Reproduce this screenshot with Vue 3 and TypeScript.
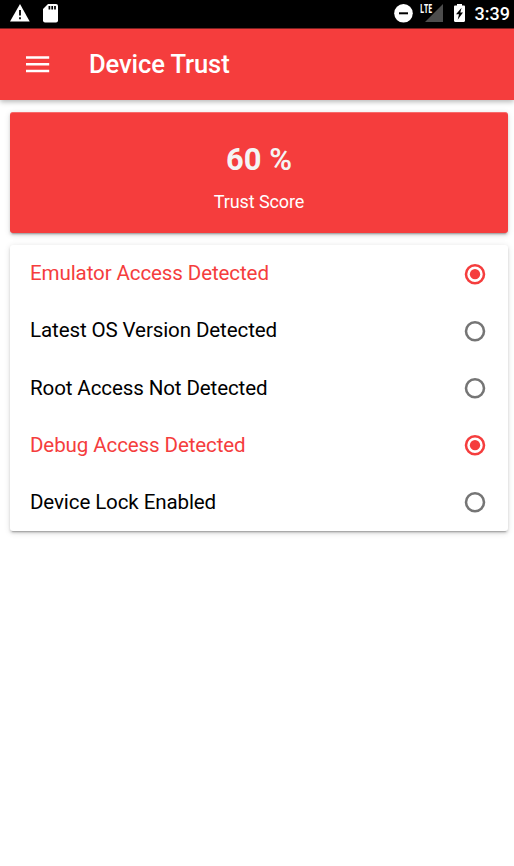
<script setup lang="ts">
interface Check {
  label: string
  alert: boolean
}

const score: number = 60
const checks: Check[] = [
  { label: 'Emulator Access Detected', alert: true },
  { label: 'Latest OS Version Detected', alert: false },
  { label: 'Root Access Not Detected', alert: false },
  { label: 'Debug Access Detected', alert: true },
  { label: 'Device Lock Enabled', alert: false },
]
</script>

<template>
  <div class="screen">
    <div class="status">
      <svg class="warning" width="20" height="18" viewBox="0 0 20 18">
        <path d="M10 0 19.700 17.500H0Z" fill="#fff" />
        <path d="M10 6v5.600M10 13.200v2" stroke="#000" stroke-width="1.800" />
      </svg>
      <svg class="sd" width="15" height="19" viewBox="0 0 15 19">
        <path d="M5 0h8a2 2 0 0 1 2 2v14.500a2 2 0 0 1-2 2H2a2 2 0 0 1-2-2V5Z" fill="#fff" />
        <path d="M6.400 2v3.500M9.200 2v3.500M12 2v3.500" stroke="#000" stroke-width="1.700" />
      </svg>
      <div class="spacer"></div>
      <svg class="dnd" width="19" height="19" viewBox="0 0 19 19">
        <circle cx="9.500" cy="9.300" r="9.300" fill="#fff" />
        <path d="M5 9.300h9" stroke="#000" stroke-width="2" />
      </svg>
      <div class="network">
        <svg width="18" height="18" viewBox="0 0 18 18"><path d="M18 0v18H0Z" fill="#4d4d4d" /></svg>
        <span class="lte">LTE</span>
      </div>
      <svg class="battery" width="11" height="18" viewBox="0 0 11 18">
        <path d="M3 0h5v1.500h1.800c.7 0 1.200.5 1.200 1.200v14.100c0 .7-.5 1.200-1.200 1.200H1.200C.5 18 0 17.500 0 16.800V2.700c0-.7.5-1.200 1.200-1.200H3Z" fill="#fff" />
        <path d="M7.600 3.800 2 10.300h3L3.700 15.700 9 8.400H6.300Z" fill="#000" />
      </svg>
      <span class="clock">3:39</span>
    </div>
    <header class="toolbar">
      <svg width="24" height="17" viewBox="0 0 24 17">
        <path d="M0 1.500h23.200M0 8.300h23.200M0 15h23.200" stroke="#fff" stroke-width="2.400" />
      </svg>
      <h1>Device Trust</h1>
    </header>
    <main>
      <section class="card score">
        <div class="value">{{ score }} <span class="percent">%</span></div>
        <div class="caption">Trust Score</div>
      </section>
      <section class="card list">
        <div v-for="check in checks" :key="check.label" class="row" :class="{ alert: check.alert }">
          <span class="label">{{ check.label }}</span>
          <svg width="22" height="22" viewBox="0 0 22 22">
            <circle cx="11" cy="11.200" r="9" fill="none" stroke="currentColor" stroke-width="2.570" />
            <circle v-if="check.alert" cx="11" cy="11.200" r="5.150" fill="currentColor" />
          </svg>
        </div>
      </section>
    </main>
  </div>
</template>

<style>
body {
  background: #fff;
}
</style>

<style scoped>
.screen {
  height: 866px;
  overflow: hidden;
  font-family: Roboto, sans-serif;
  background: #fff;
}
.status {
  height: 28px;
  box-sizing: border-box;
  display: flex;
  align-items: flex-start;
  padding: 4px 4px 0 10px;
  background: #000;
}
.sd {
  margin-left: 13px;
}
.spacer {
  flex: 1;
}
.network {
  position: relative;
  width: 23px;
  height: 18px;
  margin: 0 11px 0 7px;
  display: flex;
  justify-content: flex-end;
}
.lte {
  position: absolute;
  left: 0;
  top: -1px;
  font: 700 12px/12px "Open Sans", sans-serif;
  color: #fff;
  transform: scaleX(0.600);
  transform-origin: left;
}
.clock {
  margin-left: 10px;
  font-size: 18px;
  line-height: 20px;
  font-weight: 500;
  color: #fff;
}
.toolbar {
  height: 72px;
  display: flex;
  align-items: center;
  padding-left: 26px;
  box-sizing: border-box;
  border-top: 1px solid #7a2020;
  background: #f53d3d;
  box-shadow: 0 2px 5px rgba(0, 0, 0, 0.280);
}
h1 {
  margin: 0 0 0 39px;
  padding-bottom: 2px;
  font-size: 25.600px;
  line-height: 30px;
  font-weight: 500;
  letter-spacing: -0.120px;
  color: #fff;
}
main {
  padding: 12px 6px 0 10px;
}
.card {
  border-radius: 3px;
  box-shadow:
    0 2px 2.600px rgba(0, 0, 0, 0.140),
    0 3.200px 1.300px -2.600px rgba(0, 0, 0, 0.200),
    0 1.300px 6.400px rgba(0, 0, 0, 0.120);
}
.score {
  height: 121px;
  box-sizing: border-box;
  padding-top: 29px;
  border-top: 1px solid #f76a6a;
  background: #f53d3d;
  text-align: center;
}
.value {
  font-size: 30.900px;
  line-height: 36px;
  font-weight: 700;
  color: #f4f4f4;
}
.percent {
  font-weight: 600;
}
.caption {
  margin-top: 13px;
  font-size: 18px;
  line-height: 22px;
  letter-spacing: -0.100px;
  color: #fff;
}
.list {
  margin-top: 12px;
  background: #fff;
}
.row {
  height: 57.200px;
  box-sizing: border-box;
  display: flex;
  align-items: center;
  justify-content: space-between;
  padding: 0 22px 0 20px;
  font-size: 20.570px;
  letter-spacing: -0.120px;
  color: #000;
}
.label {
  padding-bottom: 0.800px;
}
.row svg {
  color: #757575;
}
.row.alert,
.row.alert svg {
  color: #f53d3d;
}
</style>
